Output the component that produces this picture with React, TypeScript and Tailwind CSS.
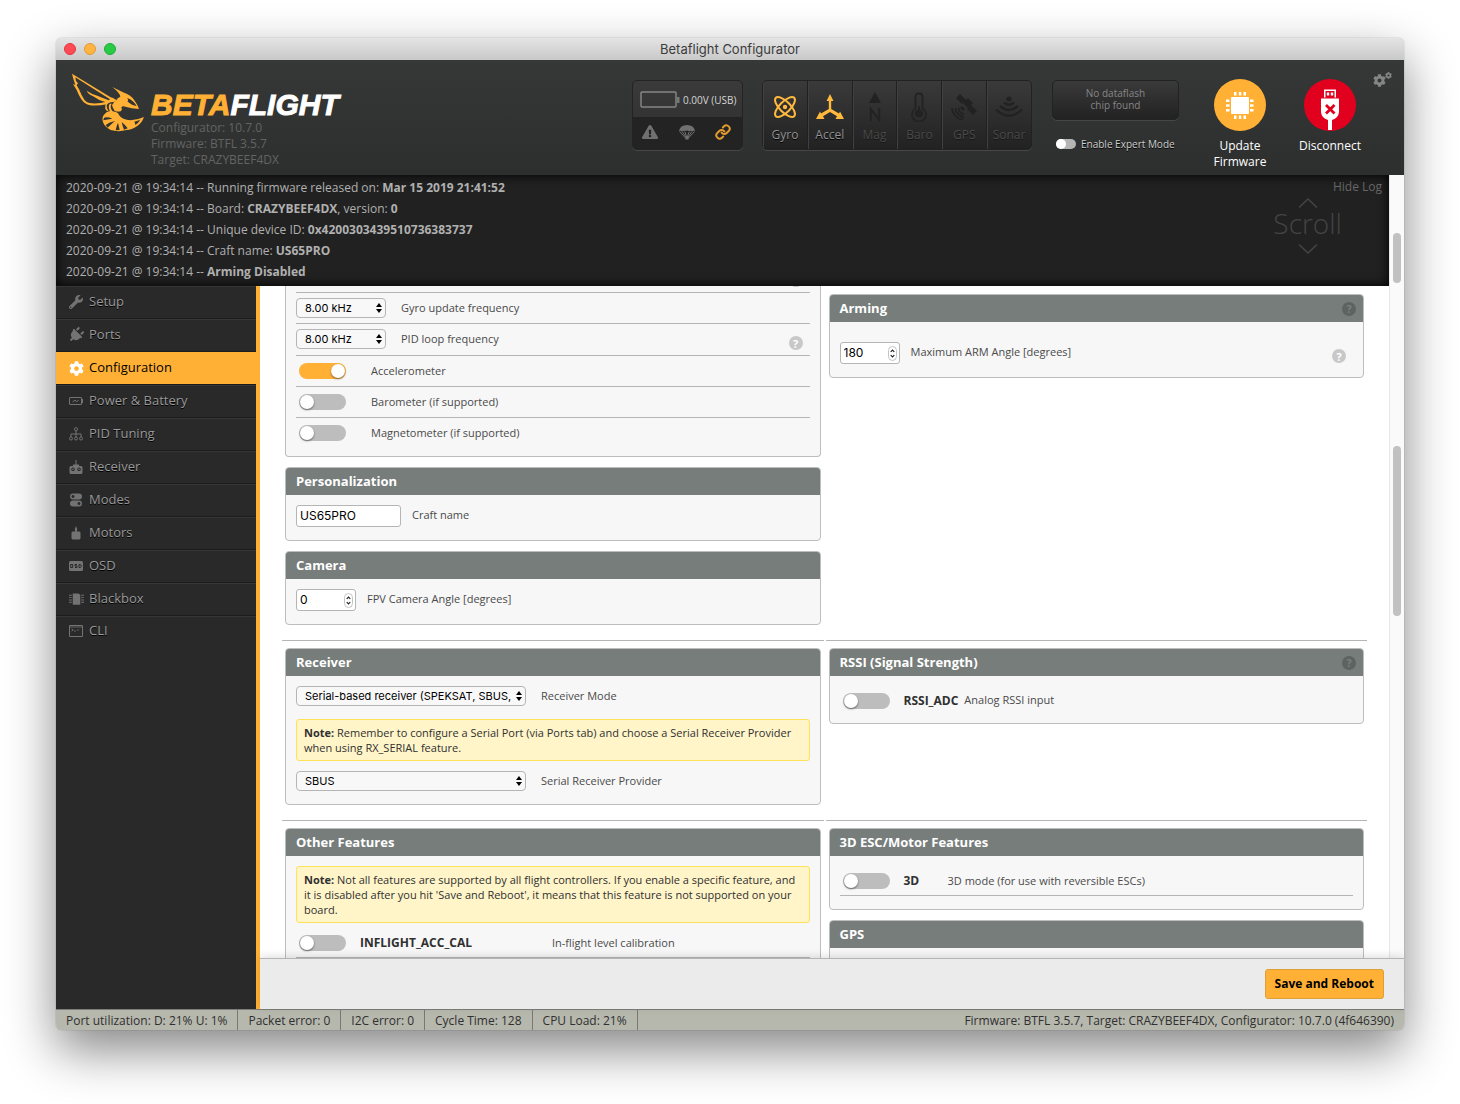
import React, { useState } from "react";
import { Link } from "lucide-react";
import { FaCog, FaExclamationTriangle, FaPlug, FaWrench } from "react-icons/fa";

const WaspLogo = () => (
  <svg viewBox="0 0 240 198" className="mt-[10px] h-[66px] w-[80px] shrink-0" aria-hidden="true">
    <path
      fill="#ffb035"
      fillRule="evenodd"
      d="M12 11 L128 82 Q136 83 141 88 L147 90 Q140 98 128 97 Q122 99 117 103 Q90 108 66 106 Q50 103 40 88 Q32 76 26 60 L15 42 L22 45 L16 26 Z M22 22 L24 33 L30 40 L26 46 L33 58 Q40 76 50 91 Q58 100 72 100 Q96 101 112 96 Q90 90 74 78 Q60 72 56 62 Q72 73 88 77 Q106 84 122 91 L126 88 Z"
    />
    <path fill="#ffb035" d="M133 51 L165 67 Q188 74 200 92 Q208 102 213 117 Q190 116 172 110 Q164 107 160 112 Q164 120 158 124 Q148 126 140 122 Q134 114 132 106 Q135 96 146 90 Q147 84 157 80 Q156 69 133 51 Z" />
    <path fill="#313332" d="M177 84 Q197 91 206 108 Q190 106 178 94 Q183 91 177 84 Z" />
    <path fill="#ffb035" d="M119 100 Q112 111 122 123 Q116 125 112 117 Q110 107 114 101 Z" />
    <path fill="#ffb035" d="M131 101 Q124 112 134 124 Q150 126 153 135 Q162 150 188 151 Q208 150 228 141 Q222 158 208 168 Q190 180 176 180 Q150 187 128 180 Q108 170 104 153 Q102 140 108 134 Q114 125 126 123 Q119 112 125 101 Z" />
    <path fill="#313332" d="M108 143 Q120 140 133 146 Q118 148 106 151 Z M113 165 Q124 156 141 153 Q130 162 119 173 Z M143 181 Q145 168 150 158 L155 180 Z M168 179 Q163 166 161 156 Q172 165 179 175 Z M199 155 Q210 152 217 149 Q211 159 202 165 Q202 160 199 155 Z" />
  </svg>
);

const GyroIcon = () => (
  <svg viewBox="0 0 26 26" className="size-[26px]" fill="none" stroke="currentColor" strokeWidth="2">
    <ellipse cx="13" cy="13" rx="13" ry="5.4" transform="rotate(45 13 13)" />
    <ellipse cx="13" cy="13" rx="13" ry="5.4" transform="rotate(-45 13 13)" />
    <circle cx="13" cy="13" r="2.2" fill="currentColor" stroke="none" />
  </svg>
);
const AccelIcon = () => (
  <svg viewBox="0 0 28 26" className="h-[26px] w-[28px]" fill="currentColor">
    <path d="M14 0 L17.5 7 H15.2 V15 L23 19.5 L24 17.5 L28 25 H19.5 L21 22.3 L14 18 L7 22.3 L8.5 25 H0 L4 17.5 L5 19.5 L12.8 15 V7 H10.5 Z" />
  </svg>
);
const MagIcon = () => (
  <svg viewBox="0 0 26 30" className="h-[30px] w-[26px]" fill="currentColor">
    <path d="M13 0 L19 11 H7 Z" />
    <path d="M8.800 29 V17 L17.200 28 V16" fill="none" stroke="currentColor" strokeWidth="2" />
  </svg>
);
const BaroIcon = () => (
  <svg viewBox="0 0 20 30" className="h-[30px] w-[20px]" fill="none" stroke="currentColor" strokeWidth="1.800">
    <path d="M6.500 16.500 V5 Q6.500 1.500 10 1.500 T13.500 5 V16.500 A7 7 0 1 1 6.500 16.500 Z" />
    <circle cx="10" cy="21.500" r="4" fill="currentColor" stroke="none" />
    <path d="M10 20 V14" />
  </svg>
);
const GpsIcon = () => (
  <svg viewBox="0 0 26 26" className="size-[26px]" fill="currentColor">
    <path d="M5 4 L9 0 L15 6 L11 10 Z M12 9 L17 4 L22 9 L17 14 Z M16 15 L20 11 L26 17 L22 21 Z M11 12 L14 15 L12 17 L9 14 Z" />
    <path d="M8 14 A5 5 0 0 0 13 20 M4.500 14 A9 9 0 0 0 13 23 M1 14 A12 12 0 0 0 12 25.500" fill="none" stroke="currentColor" strokeWidth="1.800" />
  </svg>
);
const SonarIcon = () => (
  <svg viewBox="0 0 28 22" className="h-[22px] w-[28px]" fill="none" stroke="currentColor" strokeWidth="2.400">
    <circle cx="14" cy="3" r="2.600" fill="currentColor" stroke="none" />
    <path d="M9 6.500 Q14 11 19 6.500 M5 10 Q14 18 23 10 M1 13.500 Q14 26 27 13.500" />
  </svg>
);
const ParachuteIcon = () => (
  <svg viewBox="0 0 16 15" className="h-[15px] w-4" fill="currentColor">
    <path d="M0 6 Q1 0 8 0 T16 6 Q14 5 13 7 Q12 5 10.500 6.500 Q8 4.500 5.500 6.500 Q4 5 3 7 Q2 5 0 6 Z" />
    <path d="M.5 6.500 L7.500 14 M3.500 7 L7.700 13 M6 7 L8 13 M10 7 L8 13 M12.500 7 L8.300 13 M15.500 6.500 L8.500 14" fill="none" stroke="currentColor" />
    <rect x="6.500" y="11.500" width="3" height="3" />
  </svg>
);
const ChipIcon = () => (
  <svg viewBox="0 0 52 52" className="size-[52px]" fill="#fff">
    <rect x="17" y="18" width="18" height="17" rx="1" />
    <path d="M20 13h2.500v3.500H20z M24.800 13h2.500v3.500h-2.500z M29.500 13H32v3.500h-2.500z M20 36.500h2.500V40H20z M24.800 36.500h2.500V40h-2.500z M29.500 36.500H32V40h-2.500z M12 20.500h3.500V23H12z M12 25.200h3.500v2.500H12z M12 30h3.500v2.500H12z M36 20.500h3.500V23H36z M36 25.200h3.500v2.500H36z M36 30h3.500v2.500H36z" />
  </svg>
);
const UsbIcon = () => (
  <svg viewBox="0 0 52 52" className="size-[52px]" fill="#fff">
    <path fillRule="evenodd" d="M20 10.500 H32 V18.500 H20 Z M21.500 12 V18.500 H30.500 V12 Z" />
    <path d="M22.800 13.500h2.400v3h-2.400z M26.800 13.500h2.400v3h-2.400z" />
    <path d="M17 19.500 H35 V33 Q34.500 39 28 41 V51 H24 V41 Q17.500 39 17 33 Z" />
    <path d="M22 26 L30.500 34.500 M30.500 26 L22 34.500" stroke="#e2001f" strokeWidth="2.800" />
  </svg>
);

const BatteryMini = () => (
  <svg viewBox="0 0 14 14" className="size-[14px]" fill="none" stroke="currentColor">
    <rect x=".5" y="3.500" width="12" height="7" rx=".5" />
    <path d="M13.500 5v4 M3.500 8 L6 6 L7.500 8 L9.500 6" />
  </svg>
);
const PidIcon = () => (
  <svg viewBox="0 0 14 14" className="size-[14px]" fill="none" stroke="currentColor">
    <circle cx="7" cy="2.300" r="1.600" />
    <circle cx="2" cy="11.500" r="1.500" />
    <circle cx="7" cy="11.500" r="1.500" />
    <circle cx="12" cy="11.500" r="1.500" />
    <path d="M7 4v6 M2 10V7h10v3" />
  </svg>
);
const ReceiverIcon = () => (
  <svg viewBox="0 0 14 14" className="size-[14px]" fill="currentColor">
    <path
      fillRule="evenodd"
      d="M6.500 0h1v4.500H10V6h2q1.500 0 1.500 1.500v5Q13.500 14 12 14H2q-1.500 0-1.500-1.500v-5Q.5 6 2 6h2V4.500h2.500z M4 7.500a1.800 1.800 0 1 0 .01 0z M10 7.500a1.800 1.800 0 1 0 .01 0z"
    />
    <circle cx="4" cy="9.300" r=".8" />
    <circle cx="10" cy="9.300" r=".8" />
  </svg>
);
const ModesIcon = () => (
  <svg viewBox="0 0 14 14" className="size-[14px]" fill="currentColor">
    <path fillRule="evenodd" d="M4 .5h6a3 3 0 0 1 0 6H4a3 3 0 0 1 0-6z M4 2a1.500 1.500 0 1 0 .01 0z M4 7.500h6a3 3 0 0 1 0 6H4a3 3 0 0 1 0-6z M10 9a1.500 1.500 0 1 0 .01 0z" />
  </svg>
);
const MotorIcon = () => (
  <svg viewBox="0 0 14 14" className="size-[14px]" fill="currentColor">
    <path d="M7 0 L8.200 3 L7.800 5.500 H10.500 L11.500 6.500 V12.500 L10.500 13.500 H3.500 L2.500 12.500 V6.500 L3.500 5.500 H6.200 L5.800 3 Z" />
  </svg>
);
const OsdIcon = () => (
  <svg viewBox="0 0 14 14" className="size-[14px]">
    <rect y="2" width="14" height="10" rx="1.500" fill="currentColor" />
    <path d="M1.700 5.500h2v3h-2z M8 5.500H6v1.500h2v1.500H6 M10 5.500h1.200l1 .7v1.600l-1 .7H10z" fill="none" stroke="#292929" />
  </svg>
);
const BlackboxIcon = () => (
  <svg viewBox="0 0 16 14" className="h-[14px] w-[15px]" fill="currentColor">
    <path d="M4 1h6l2 1.500V13H4z M0 2.500h3v1H0z M0 5h3v1H0z M0 7.500h3v1H0z M0 10h3v1H0z M13 2.500h3v1h-3z M13 5h3v1h-3z M13 7.500h3v1h-3z M13 10h3v1h-3z" />
  </svg>
);
const CliIcon = () => (
  <svg viewBox="0 0 14 14" className="size-[14px]" fill="none" stroke="currentColor">
    <path d="M.5 1.500h13v11H.5z" />
    <path d="M1 3h12 M2.500 4.800l1.800 1.200-1.800 1.200 M5 7h2 M8 6h2" strokeWidth=".8" />
  </svg>
);

const Help = ({ dark = false }: { dark?: boolean }) => (
  <button
    type="button"
    aria-label="Help"
    className={
      dark
        ? "flex size-[14px] shrink-0 items-center justify-center rounded-full bg-[#5d6361] text-[11px] leading-none font-bold text-[#7a807d]"
        : "flex size-[14px] shrink-0 items-center justify-center rounded-full bg-[#c8c8c8] text-[11px] leading-none font-bold text-white"
    }
  >
    ?
  </button>
);

const Toggle = ({ on = false, label }: { on?: boolean; label: string }) => {
  const [checked, setChecked] = useState(on);
  return (
    <span className="relative ml-[3px] inline-flex h-4 w-[47px] shrink-0">
      <input
        type="checkbox"
        aria-label={label}
        checked={checked}
        onChange={() => setChecked(!checked)}
        className="peer absolute inset-0 z-10 m-0 size-full cursor-pointer opacity-0"
      />
      <span className="h-4 w-[47px] rounded-full bg-[#bdbdbd] peer-checked:bg-[#ffb035]" />
      <span className="absolute top-[1px] left-[1px] size-[14px] rounded-full bg-white shadow-[0_1px_2px_rgba(0,0,0,0.5)] peer-checked:left-8" />
    </span>
  );
};

const Select = ({ id, value, wide = false }: { id: string; value: string; wide?: boolean }) => (
  <span className={wide ? "relative w-[230px] shrink-0" : "relative w-[90px] shrink-0"}>
    <select
      id={id}
      defaultValue={value}
      className="block h-5 w-full appearance-none rounded-[4px] border border-[#b5b5b5] bg-[#f8f8f8] pr-[14px] pl-2 font-['Inter',sans-serif] text-[11px] leading-[16px] text-black"
    >
      <option>{value}</option>
    </select>
    <svg viewBox="0 0 6 10" className="pointer-events-none absolute top-[5px] right-1 h-[10px] w-[6px]">
      <path d="M3 0 L6 4 H0 Z M3 10 L0 6 H6 Z" fill="#000" />
    </svg>
  </span>
);

const NumberBox = ({ id, value }: { id: string; value: number }) => (
  <span className="relative w-[60px] shrink-0">
    <input
      id={id}
      type="number"
      defaultValue={value}
      className="block h-[22px] w-full appearance-none rounded-[3px] border border-[#b5b5b5] bg-white px-[3px] pb-px font-['Inter',sans-serif] text-[12px] text-black [&::-webkit-inner-spin-button]:appearance-none"
    />
    <svg viewBox="0 0 9 15" className="pointer-events-none absolute top-1 right-[3px] h-[15px] w-[9px]" fill="none">
      <rect x=".5" y=".5" width="8" height="14" rx="4" fill="#fff" stroke="#c4c4c4" />
      <path d="M2.700 5.800 L4.500 4 L6.300 5.800 M2.700 9.200 L4.500 11 L6.300 9.200" stroke="#222" strokeWidth="1.200" />
    </svg>
  </span>
);

const Box = ({ title, help = false, children }: { title: string; help?: boolean; children?: React.ReactNode }) => (
  <section className="overflow-hidden rounded-[4px] border border-[#bdbdbd] bg-[#f7f7f7]">
    <div className="flex h-[27px] items-center justify-between bg-[#777d7b] pr-[7px] pl-[10px]">
      <h2 className="text-[13px] font-bold text-white">{title}</h2>
      {help && <Help dark />}
    </div>
    <div className="px-[10px]">{children}</div>
  </section>
);

const Note = ({ children }: { children: React.ReactNode }) => (
  <p className="rounded-[3px] border border-[#ffe259] bg-[#fff5c9] px-[7px] py-[5px] text-[11px] leading-[15px] text-[#303030]">
    <b>Note:</b> {children}
  </p>
);

const Row = ({ children }: { children: React.ReactNode }) => (
  <div className="flex h-[31px] items-center border-t border-[#b5b5b5]">{children}</div>
);

const nav = [
  { label: "Setup", icon: <FaWrench className="size-[14px]" /> },
  { label: "Ports", icon: <FaPlug className="size-4 shrink-0 rotate-45" /> },
  { label: "Configuration", icon: <FaCog className="size-[15px]" />, active: true },
  { label: "Power & Battery", icon: <BatteryMini /> },
  { label: "PID Tuning", icon: <PidIcon /> },
  { label: "Receiver", icon: <ReceiverIcon /> },
  { label: "Modes", icon: <ModesIcon /> },
  { label: "Motors", icon: <MotorIcon /> },
  { label: "OSD", icon: <OsdIcon /> },
  { label: "Blackbox", icon: <BlackboxIcon /> },
  { label: "CLI", icon: <CliIcon /> },
];

const sensors = [
  { label: "Gyro", icon: <GyroIcon />, on: true },
  { label: "Accel", icon: <AccelIcon />, on: true },
  { label: "Mag", icon: <MagIcon /> },
  { label: "Baro", icon: <BaroIcon /> },
  { label: "GPS", icon: <GpsIcon /> },
  { label: "Sonar", icon: <SonarIcon /> },
];

const log = [
  ["Running firmware released on: ", "Mar 15 2019 21:41:52", "", ""],
  ["Board: ", "CRAZYBEEF4DX", ", version: ", "0"],
  ["Unique device ID: ", "0x4200303439510736383737", "", ""],
  ["Craft name: ", "US65PRO", "", ""],
  ["", "Arming Disabled", "", ""],
];

const Header = () => (
  <header className="flex h-[115px] shrink-0 bg-linear-to-b from-[#363837] to-[#2d2f2e]">
    <div className="flex pl-3">
      <WaspLogo />
      <div className="ml-[3px] pt-[29px]">
        <h1 className="font-['Liberation_Sans',sans-serif] text-[30px] leading-[31px] font-bold whitespace-nowrap text-white italic [-webkit-text-stroke:1px_currentColor]">
          <span className="text-[#ffb035]">BETA</span>FLIGHT
        </h1>
        <p className="text-[12px] leading-4 text-[#636363]">
          Configurator: 10.7.0
          <br />
          Firmware: BTFL 3.5.7
          <br />
          Target: CRAZYBEEF4DX
        </p>
      </div>
    </div>
    <div className="ml-auto flex items-start pr-3">
      <div className="mt-5 h-[70px] w-[111px] overflow-hidden rounded-[5px] border border-[#232323] bg-linear-to-b from-[#3a3a3a] to-[#2e2e2e] shadow-[0_1px_0_#454746]">
        <div className="flex h-9 items-center pt-[2px] pl-[7px]">
          <svg viewBox="0 0 40 18" className="h-[18px] w-10" fill="none">
            <rect x="1" y="1" width="35" height="15" rx="1" stroke="#858585" strokeWidth="1.500" />
            <rect x="37" y="6" width="2.500" height="6" fill="#777" />
          </svg>
          <span className="ml-[3px] text-[10px] whitespace-nowrap text-[#d5d5d5]">0.00V (USB)</span>
        </div>
        <div className="flex h-8 items-center justify-between bg-[#232323] pr-[11px] pb-[2px] pl-[9px] text-[#707070]">
          <FaExclamationTriangle className="size-4" />
          <ParachuteIcon />
          <Link className="size-4 text-[#e09a2d]" strokeWidth={3} />
        </div>
      </div>
      <ul className="mt-5 ml-[19px] flex h-[70px] w-[270px] overflow-hidden rounded-[5px] border border-[#222] bg-linear-to-b from-[#3a3a3a] to-[#222] shadow-[0_1px_0_#454746]">
        {sensors.map((s) => (
          <li
            key={s.label}
            className="flex flex-1 flex-col items-center border-r border-[#202020] pt-[9px] shadow-[inset_1px_0_0_#404040] last:border-r-0"
          >
            <span className={s.on ? "flex h-[34px] items-center text-[#ffb93c]" : "flex h-[34px] items-center text-[#222]"}>{s.icon}</span>
            <span
              className={
                s.on
                  ? "text-[12px] leading-[22px] text-[#949494] [text-shadow:0_1px_#000]"
                  : "text-[12px] leading-[22px] text-[#4a4a4a] [text-shadow:0_1px_#151515]"
              }
            >
              {s.label}
            </span>
          </li>
        ))}
      </ul>
      <div className="mt-5 ml-5 w-[127px]">
        <div className="flex h-10 items-center justify-center rounded-[5px] border border-[#222] bg-linear-to-b from-[#3a3a3a] to-[#222] pb-[2px] text-center text-[10px] leading-3 text-[#868686] shadow-[0_1px_0_#454746]">
          No dataflash
          <br />
          chip found
        </div>
        <label className="mt-[17px] flex items-center pl-1 text-[10px] leading-[14px] whitespace-nowrap text-[#cfcfcf] [text-shadow:0_1px_#000]">
          <input type="checkbox" className="peer sr-only" />
          <span className="mr-[5px] h-[10px] w-5 rounded-full bg-[#b5b5b5]">
            <span className="block size-[10px] rounded-full bg-white" />
          </span>
          Enable Expert Mode
        </label>
      </div>
      <button type="button" className="mt-[19px] ml-4 flex w-[90px] flex-col items-center text-[12px] leading-4 text-white">
        <span className="mb-[7px] rounded-full bg-[#ffb035]">
          <ChipIcon />
        </span>
        Update
        <br />
        Firmware
      </button>
      <button type="button" className="mt-[19px] flex w-[90px] flex-col items-center text-[12px] leading-4 text-white">
        <span className="mb-[7px] rounded-full bg-[#e2001f]">
          <UsbIcon />
        </span>
        Disconnect
      </button>
      <button type="button" aria-label="Options" className="mt-3 -ml-[2px] flex w-[19px] items-start text-[#858585]">
        <FaCog className="mt-[2px] size-[13px] shrink-0" />
        <FaCog className="-ml-px size-[7px] shrink-0" />
      </button>
    </div>
  </header>
);

const Scrollbar = ({ children }: { children: React.ReactNode }) => (
  <div className="flex w-[15px] shrink-0 flex-col items-center border-l border-[#e6e6e6] bg-[#fafafa]">{children}</div>
);

export default function App() {
  return (
    <div className="flex h-screen flex-col bg-white px-14 pt-[38px] pb-[74px] font-['Open_Sans',sans-serif] text-[#4a4a4a]">
      <div className="flex min-h-0 flex-1 flex-col overflow-hidden rounded-[6px] shadow-[0_0_1px_rgba(0,0,0,0.6),0_20px_50px_rgba(0,0,0,0.48)]">
        <div className="grid h-[22px] shrink-0 grid-cols-3 items-center bg-linear-to-b from-[#e4e4e4] to-[#c9c9c9] px-2">
          <div className="flex gap-2">
            <button type="button" aria-label="Close" className="size-3 rounded-full border border-[#e2333e] bg-[#ff4a55]" />
            <button type="button" aria-label="Minimize" className="size-3 rounded-full border border-[#e09a35] bg-[#ffb441]" />
            <button type="button" aria-label="Zoom" className="size-3 rounded-full border border-[#1eac38] bg-[#28ca46]" />
          </div>
          <div className="text-center font-['Inter',sans-serif] text-[13px] leading-[22px] text-[#3c3c3c]">Betaflight Configurator</div>
        </div>

        <Header />

        <div className="flex h-[111px] shrink-0">
          <div className="flex min-w-0 flex-1 justify-between bg-[#212121] pr-[7px] pl-[10px] text-[12px] text-[#b0b0b0] shadow-[inset_0_0_12px_#000]">
            <div className="pt-[2px] leading-[21px]">
              {log.map(([a, b, c, d]) => (
                <p key={b}>
                  2020-09-21 @ 19:34:14 -- {a}
                  <b>{b}</b>
                  {c}
                  <b>{d}</b>
                </p>
              ))}
            </div>
            <div className="flex">
              <div className="-mr-[9px] flex flex-col items-center pt-[23px] text-[#444]">
                <svg viewBox="0 0 20 10" className="h-[10px] w-5" fill="none" stroke="currentColor" strokeWidth="1.500">
                  <path d="M1 9.500 L10 1 L19 9.500" />
                </svg>
                <span className="text-[28px] leading-[30px] font-light">Scroll</span>
                <svg viewBox="0 0 20 10" className="mt-[6px] h-[10px] w-5" fill="none" stroke="currentColor" strokeWidth="1.500">
                  <path d="M1 .5 L10 9 L19 .5" />
                </svg>
              </div>
              <button type="button" className="h-6 text-[12px] text-[#666]">
                Hide Log
              </button>
            </div>
          </div>
          <Scrollbar>
            <div className="mt-[58px] h-[50px] w-2 rounded-full bg-[#c1c1c1]" />
          </Scrollbar>
        </div>

        <div className="flex min-h-0 flex-1">
          <nav className="w-[204px] shrink-0 border-r-4 border-[#ffb035] bg-[#292929]">
            {nav.map((n) => (
              <a
                key={n.label}
                href="#"
                className={
                  n.active
                    ? "flex h-[33px] items-center border-b border-[#1c1c1c] bg-[#ffb035] pl-3 text-[13px] text-black [&>span]:text-white"
                    : "flex h-[33px] items-center border-b border-[#1c1c1c] pb-px pl-3 text-[13px] text-[#999] shadow-[inset_0_1px_#363636] [text-shadow:0_1px_#000] last:h-[31px] last:border-b-0 [&>span]:text-[#737373]"
                }
              >
                <span className="mr-[5px] flex w-4 justify-center">{n.icon}</span>
                {n.label}
              </a>
            ))}
          </nav>

          <div className="flex min-w-0 flex-1 flex-col">
            <div className="flex min-h-0 flex-1">
              <main className="min-w-0 flex-1 overflow-hidden bg-white px-[22px] text-[11px]">
                <div className="grid grid-cols-2 gap-x-[2px] [&>div]:px-[3px]">
                  <div className="pb-[15px]">
                    <section className="rounded-b-[4px] border border-t-0 border-[#bdbdbd] bg-[#f7f7f7] px-[10px] pb-[8px]">
                      <div className="flex h-[6px] justify-end overflow-hidden pr-[11px]">
                        <span className="h-px w-[6px] rounded-b-full bg-[#c8c8c8]" />
                      </div>
                      <Row>
                        <Select id="gyro" value="8.00 kHz" />
                        <label htmlFor="gyro" className="ml-[15px]">Gyro update frequency</label>
                      </Row>
                      <div className="flex h-8 items-center border-t border-[#b5b5b5] pb-px">
                        <Select id="pid" value="8.00 kHz" />
                        <label htmlFor="pid" className="ml-[15px] flex-1">PID loop frequency</label>
                        <div className="mt-2 mr-[7px]"><Help /></div>
                      </div>
                      <Row>
                        <Toggle on label="Accelerometer" />
                        <span className="ml-[25px]">Accelerometer</span>
                      </Row>
                      <Row>
                        <Toggle label="Barometer" />
                        <span className="ml-[25px]">Barometer (if supported)</span>
                      </Row>
                      <Row>
                        <Toggle label="Magnetometer" />
                        <span className="ml-[25px]">Magnetometer (if supported)</span>
                      </Row>
                    </section>
                    <div className="mt-[10px]">
                      <Box title="Personalization">
                        <div className="flex items-start pt-[10px] pb-[13px]">
                          <input
                            id="craft"
                            type="text"
                            defaultValue="US65PRO"
                            className="h-[22px] w-[105px] rounded-[3px] border border-[#b5b5b5] bg-white px-[3px] pb-px font-['Inter',sans-serif] text-[12px] text-black"
                          />
                          <label htmlFor="craft" className="ml-[11px] leading-5">Craft name</label>
                        </div>
                      </Box>
                    </div>
                    <div className="mt-[10px]">
                      <Box title="Camera">
                        <div className="flex items-start pt-[10px] pb-[13px]">
                          <NumberBox id="camera" value={0} />
                          <label htmlFor="camera" className="ml-[11px] leading-5">FPV Camera Angle [degrees]</label>
                        </div>
                      </Box>
                    </div>
                  </div>
                  <div className="pt-2">
                    <Box title="Arming" help>
                      <div className="flex items-start pt-5 pb-[13px]">
                        <NumberBox id="arm" value={180} />
                        <label htmlFor="arm" className="ml-[11px] flex-1 leading-5">Maximum ARM Angle [degrees]</label>
                        <div className="mt-[7px] mr-[7px]"><Help /></div>
                      </div>
                    </Box>
                  </div>

                  <div className="border-t border-[#b5b5b5] pt-[7px] pb-[15px]">
                    <Box title="Receiver">
                      <div className="flex items-center pt-[10px]">
                        <Select id="rxmode" value="Serial-based receiver (SPEKSAT, SBUS, SUMD)" wide />
                        <label htmlFor="rxmode" className="ml-[15px]">Receiver Mode</label>
                      </div>
                      <div className="pt-[13px] pb-[10px]">
                        <Note>
                          Remember to configure a Serial Port (via Ports tab) and choose a Serial Receiver Provider when using RX_SERIAL feature.
                        </Note>
                      </div>
                      <div className="flex items-center pb-[13px]">
                        <Select id="rxprov" value="SBUS" wide />
                        <label htmlFor="rxprov" className="ml-[15px]">Serial Receiver Provider</label>
                      </div>
                    </Box>
                  </div>
                  <div className="border-t border-[#b5b5b5] pt-[7px]">
                    <Box title="RSSI (Signal Strength)" help>
                      <div className="flex h-[47px] items-center pt-[2px]">
                        <Toggle label="RSSI_ADC" />
                        <b className="ml-[14px] text-[12px] text-[#303030]">RSSI_ADC</b>
                        <span className="ml-[6px]">Analog RSSI input</span>
                      </div>
                    </Box>
                  </div>

                  <div className="border-t border-[#b5b5b5] pt-[7px]">
                    <Box title="Other Features">
                      <div className="pt-[10px] pb-[5px]">
                        <Note>
                          Not all features are supported by all flight controllers. If you enable a specific feature, and it is disabled after you hit &apos;Save and Reboot&apos;, it means that this feature is not supported on your board.
                        </Note>
                      </div>
                      <div className="flex h-[30px] items-center border-b border-[#b5b5b5] pt-px">
                        <Toggle label="INFLIGHT_ACC_CAL" />
                        <b className="ml-[14px] w-[192px] text-[12px] text-[#303030]">INFLIGHT_ACC_CAL</b>
                        <span>In-flight level calibration</span>
                      </div>
                      <div className="h-8" />
                    </Box>
                  </div>
                  <div className="border-t border-[#b5b5b5] pt-[7px]">
                    <Box title="3D ESC/Motor Features">
                      <div className="pt-[10px] pb-[13px]">
                        <div className="flex h-[30px] items-center border-b border-[#b5b5b5] pt-px">
                          <Toggle label="3D" />
                          <b className="ml-[14px] w-11 text-[12px] text-[#303030]">3D</b>
                          <span>3D mode (for use with reversible ESCs)</span>
                        </div>
                      </div>
                    </Box>
                    <div className="mt-[10px]">
                      <Box title="GPS">
                        <div className="h-8" />
                      </Box>
                    </div>
                  </div>
                </div>
              </main>
              <Scrollbar>
                <div className="mt-[160px] h-[170px] w-2 rounded-full bg-[#c1c1c1]" />
              </Scrollbar>
            </div>
            <div className="relative flex h-[51px] shrink-0 items-center justify-end border-t border-[#b5b5b5] bg-[#ebebeb] pr-5 shadow-[0_-2px_8px_rgba(0,0,0,0.12)]">
              <button type="button" className="h-[30px] rounded-[3px] border border-[#dba038] bg-[#ffb035] px-[9px] text-[12px] font-bold text-black">
                Save and Reboot
              </button>
            </div>
          </div>
        </div>

        <footer className="flex h-[21px] shrink-0 items-center border-t border-[#7d7d78] bg-[#b6b7ad] text-[12px] whitespace-nowrap text-[#303030]">
          {["Port utilization: D: 21% U: 1%", "Packet error: 0", "I2C error: 0", "Cycle Time: 128", "CPU Load: 21%"].map((t) => (
            <span key={t} className="flex h-full items-center border-r border-[#777972] px-[10px] pt-[2px]">
              {t}
            </span>
          ))}
          <span className="ml-auto pt-[2px] pr-[10px]">Firmware: BTFL 3.5.7, Target: CRAZYBEEF4DX, Configurator: 10.7.0 (4f646390)</span>
        </footer>
      </div>
    </div>
  );
}
